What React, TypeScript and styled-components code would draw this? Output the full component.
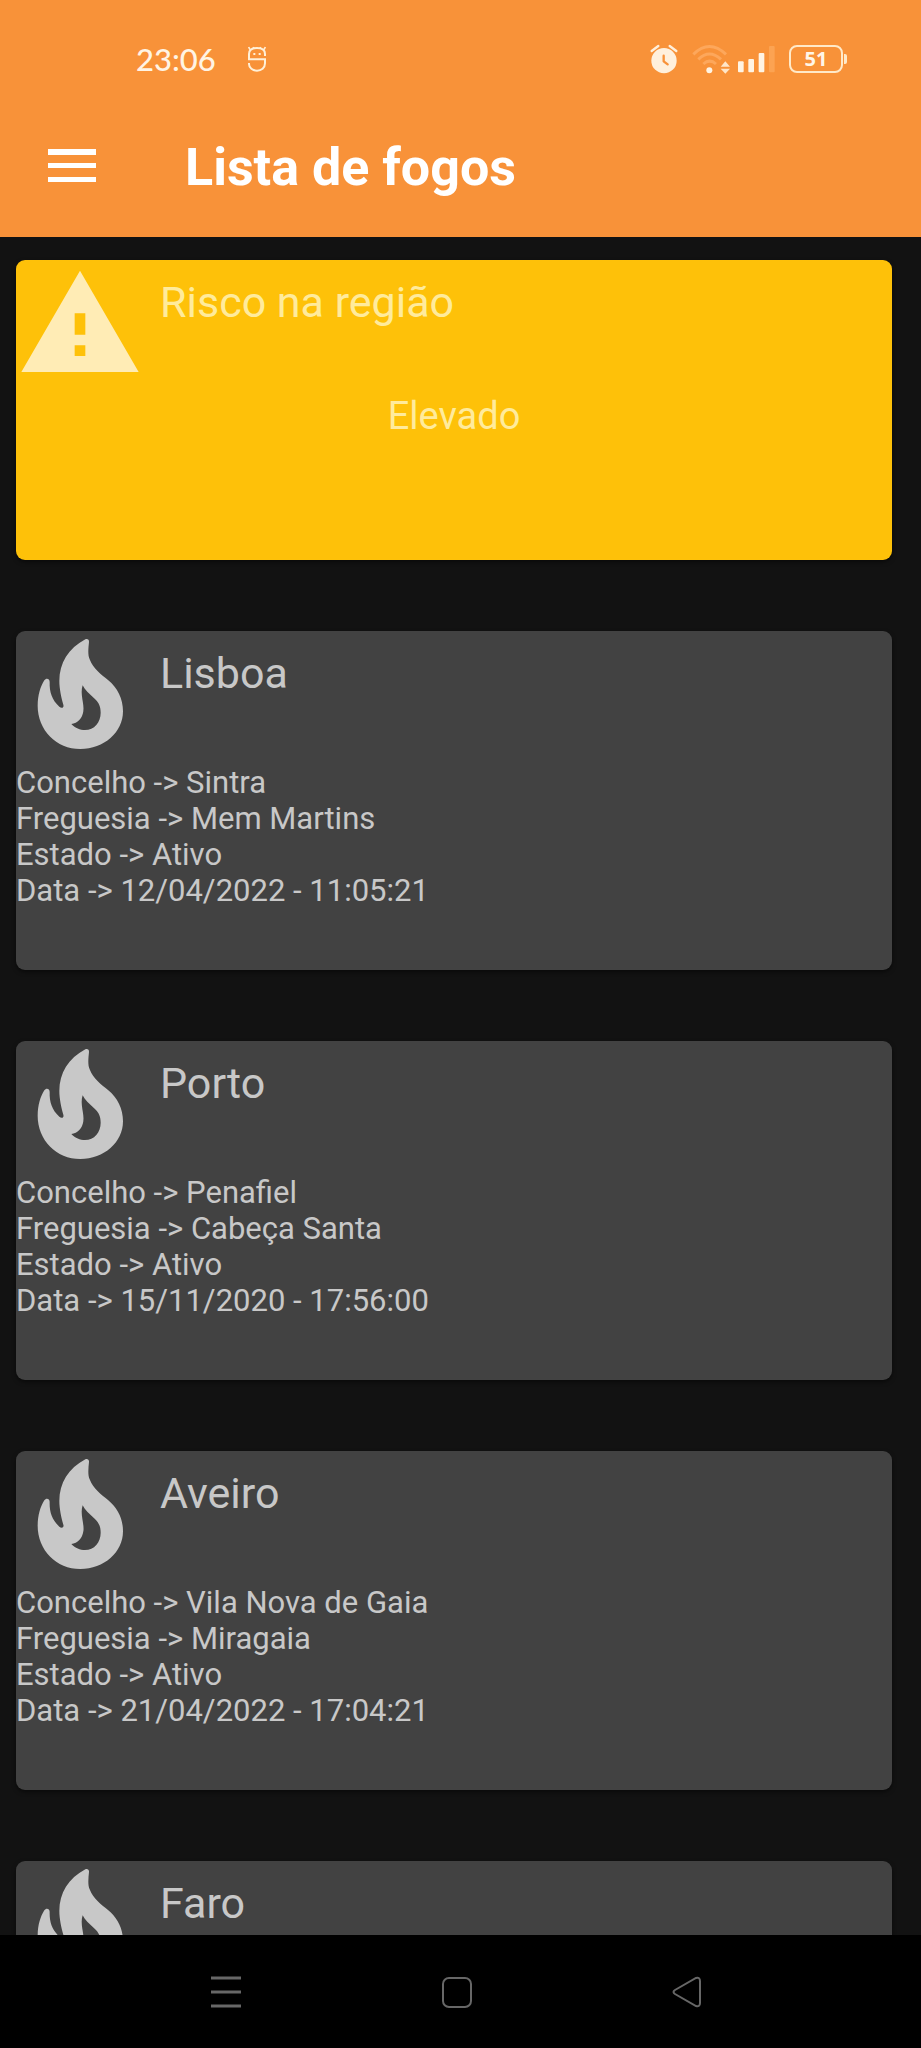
import React from "react";
import styled, { createGlobalStyle } from "styled-components";

const GlobalStyle = createGlobalStyle`
  *, *::before, *::after { box-sizing: border-box; }
  body {
    margin: 0;
    background: #121212;
    font-family: Roboto, "Liberation Sans", sans-serif;
  }
  h1, h2, p, ul { margin: 0; padding: 0; }
`;

const Screen = styled.div`
  display: flex;
  flex-direction: column;
  height: 100vh;
  overflow: hidden;
`;

const Header = styled.header`
  flex: none;
  background: #f89239;
  color: #ffffff;
`;

const StatusBar = styled.div`
  display: flex;
  align-items: center;
  justify-content: space-between;
  height: 118px;
  padding: 0 74px 0 136px;
`;

const StatusGroup = styled.div<{ $gap: number }>`
  display: flex;
  align-items: center;
  gap: ${({ $gap }) => $gap}px;
`;

const Clock = styled.time`
  font-family: Lato, sans-serif;
  font-size: 31px;
  line-height: 36px;
  font-weight: 500;
  color: #fff4e4;
`;

const Battery = styled.div`
  position: relative;
  display: flex;
  align-items: center;
  justify-content: center;
  width: 54px;
  height: 28px;
  margin-right: 4px;
  border: 2px solid #ffe9c8;
  border-radius: 8px;
  font-family: "Open Sans", sans-serif;
  font-size: 20px;
  line-height: 24px;
  font-weight: 700;
  color: #fff6e8;

  &::after {
    content: "";
    position: absolute;
    left: 53px;
    top: 7px;
    width: 3px;
    height: 10px;
    border-radius: 0 2px 2px 0;
    background: #ffe9c8;
  }
`;

const AppBar = styled.div`
  display: flex;
  align-items: center;
  gap: 88px;
  height: 119px;
  padding: 0 47px 24px;
`;

const MenuButton = styled.button`
  display: flex;
  padding: 0;
  border: 0;
  background: none;
  color: inherit;
`;

const PageTitle = styled.h1`
  padding-top: 4px;
  font-size: 52px;
  line-height: 60px;
  font-weight: 700;
`;

const List = styled.main`
  flex: 1;
  min-height: 0;
  overflow: hidden;
  display: flex;
  flex-direction: column;
  gap: 71px;
  padding: 23px 29px 0 16px;
`;

const Card = styled.article<{ $tone: "risk" | "fire" }>`
  flex: none;
  min-height: ${({ $tone }) => ($tone === "risk" ? 300 : 339)}px;
  border-radius: 9px;
  background: ${({ $tone }) => ($tone === "risk" ? "#fec109" : "#424242")};
  color: ${({ $tone }) => ($tone === "risk" ? "#ffeb9c" : "#c8c8c8")};
  box-shadow: 0 2px 4px rgba(0, 0, 0, 0.5);
`;

const CardHead = styled.div`
  display: flex;
  gap: 16px;
  height: 128px;
`;

const CardTitle = styled.h2`
  padding-top: 16px;
  font-size: 43px;
  line-height: 52px;
  font-weight: 400;
`;

const RiskLevel = styled.p`
  padding-top: 6px;
  font-size: 38px;
  line-height: 44px;
  text-align: center;
`;

const Details = styled.ul`
  padding-top: 6px;
  list-style: none;
  font-size: 31px;
  line-height: 36px;
`;

const NavBar = styled.nav`
  flex: none;
  display: flex;
  justify-content: center;
  height: 113px;
  padding-right: 8px;
  background: #000000;
`;

const NavButton = styled.button`
  display: flex;
  align-items: center;
  justify-content: center;
  width: 25vw;
  padding: 0;
  border: 0;
  background: none;
`;

const FaceIcon = () => (
  <svg width="20" height="28" viewBox="0 0 60 84" fill="none" stroke="#fff0d8" strokeWidth="6" aria-hidden="true">
    <path d="M54 33V27C54 14 43 9 30 9S6 14 6 27V43H54V55C54 69 43 77 30 77S6 69 6 57V54" />
    <path d="M9 14L5 6M51 14L55 6M18 7L22 10M42 7L38 10" strokeWidth="5" />
    <path d="M19 27h6M35 27h6" />
  </svg>
);

const AlarmIcon = () => (
  <svg width="28" height="30" viewBox="0 0 84 90" aria-hidden="true">
    <circle cx="42" cy="50" r="38" fill="#fff0dc" />
    <path d="M5 21L25 6M79 21L59 6" stroke="#fff0dc" strokeWidth="7" strokeLinecap="round" />
    <path d="M41 35V52L53 61" fill="none" stroke="#f89239" strokeWidth="7" strokeLinecap="round" strokeLinejoin="round" />
  </svg>
);

const WifiIcon = () => (
  <svg width="38" height="30" viewBox="0 0 114 90" aria-hidden="true">
    <g fill="none" stroke="#fda75b" strokeWidth="9">
      <path d="M4 31Q52 -16 102 31" />
      <path d="M19 46Q52 14 87 46" />
      <path d="M34 60Q53 43 72 60" />
    </g>
    <circle cx="52" cy="79" r="9" fill="#fff4e4" />
    <path d="M86 68L100 52L114 68ZM86 74L100 89L114 74Z" fill="#ffe6c8" />
  </svg>
);

const SignalIcon = () => (
  <svg width="37" height="28" viewBox="0 0 111 84" fill="#fff4e4" aria-hidden="true">
    <rect x="0" y="49" width="17" height="33" rx="3" />
    <rect x="31" y="42" width="17" height="40" rx="3" />
    <rect x="62" y="24" width="17" height="58" rx="3" />
    <rect x="93" y="3" width="17" height="79" rx="3" fill="#fca352" />
  </svg>
);

const MenuIcon = () => (
  <svg width="50" height="34" viewBox="0 0 50 34" fill="currentColor" aria-hidden="true">
    <path d="M1 0H49V6H1ZM1 14H49V19H1ZM1 28H49V33H1Z" />
  </svg>
);

const WarningIcon = () => (
  <svg width="128" height="128" viewBox="0 0 24 24" fill="#ffecb5" aria-hidden="true">
    <path d="M1 21h22L12 2 1 21zm12-3h-2v-2h2v2zm0-4h-2v-4h2v4z" />
  </svg>
);

const FireIcon = () => (
  <svg width="128" height="128" viewBox="48 273 384 384" fill="#c8c8c8" aria-hidden="true">
    <path
      fillRule="evenodd"
      d="M256 298C262 295 268 299 267 306C265 325 263 345 269 358C280 387 303 403 324 420C353 444 369 476 369 514C369 577 312 627 241 627C169 627 113 570 113 497C113 466 121 440 133 421C138 413 149 415 149 426C148 456 156 480 178 500C185 507 193 502 190 494C184 474 178 446 178 423C178 370 205 325 256 298ZM248 436C239 462 254 493 250 514C247 536 233 550 214 552C226 565 240 570 255 570C283 570 302 547 302 518C302 500 297 488 284 476C267 461 254 449 248 436Z"
    />
  </svg>
);

const fires = [
  { district: "Lisboa", council: "Sintra", parish: "Mem Martins", state: "Ativo", date: "12/04/2022 - 11:05:21" },
  { district: "Porto", council: "Penafiel", parish: "Cabeça Santa", state: "Ativo", date: "15/11/2020 - 17:56:00" },
  { district: "Aveiro", council: "Vila Nova de Gaia", parish: "Miragaia", state: "Ativo", date: "21/04/2022 - 17:04:21" },
  { district: "Faro" },
];

export default function App() {
  return (
    <Screen>
      <GlobalStyle />
      <Header>
        <StatusBar>
          <StatusGroup $gap={31}>
            <Clock>23:06</Clock>
            <FaceIcon />
          </StatusGroup>
          <StatusGroup $gap={14}>
            <AlarmIcon />
            <StatusGroup $gap={8}>
              <WifiIcon />
              <SignalIcon />
            </StatusGroup>
            <Battery>51</Battery>
          </StatusGroup>
        </StatusBar>
        <AppBar>
          <MenuButton type="button" aria-label="Menu">
            <MenuIcon />
          </MenuButton>
          <PageTitle>Lista de fogos</PageTitle>
        </AppBar>
      </Header>
      <List>
        <Card $tone="risk">
          <CardHead>
            <WarningIcon />
            <CardTitle>Risco na região</CardTitle>
          </CardHead>
          <RiskLevel>Elevado</RiskLevel>
        </Card>
        {fires.map((fire) => (
          <Card $tone="fire" key={fire.district}>
            <CardHead>
              <FireIcon />
              <CardTitle>{fire.district}</CardTitle>
            </CardHead>
            {fire.council && (
              <Details>
                <li>Concelho -&gt; {fire.council}</li>
                <li>Freguesia -&gt; {fire.parish}</li>
                <li>Estado -&gt; {fire.state}</li>
                <li>Data -&gt; {fire.date}</li>
              </Details>
            )}
          </Card>
        ))}
      </List>
      <NavBar>
        <NavButton type="button" aria-label="Recentes">
          <svg width="32" height="32" viewBox="0 0 32 32" stroke="#676767" strokeWidth="3" aria-hidden="true">
            <path d="M1 2H31M1 16H31M1 30H31" />
          </svg>
        </NavButton>
        <NavButton type="button" aria-label="Início">
          <svg width="32" height="32" viewBox="0 0 32 32" fill="none" stroke="#676767" strokeWidth="2" aria-hidden="true">
            <rect x="2" y="2" width="28" height="29" rx="6" />
          </svg>
        </NavButton>
        <NavButton type="button" aria-label="Voltar">
          <svg width="32" height="32" viewBox="0 0 32 32" fill="none" stroke="#676767" strokeWidth="2" aria-hidden="true">
            <path d="M4 14L25 2Q29 1 29 5V27Q29 31 25 30L4 18Q1 16 4 14Z" />
          </svg>
        </NavButton>
      </NavBar>
    </Screen>
  );
}
